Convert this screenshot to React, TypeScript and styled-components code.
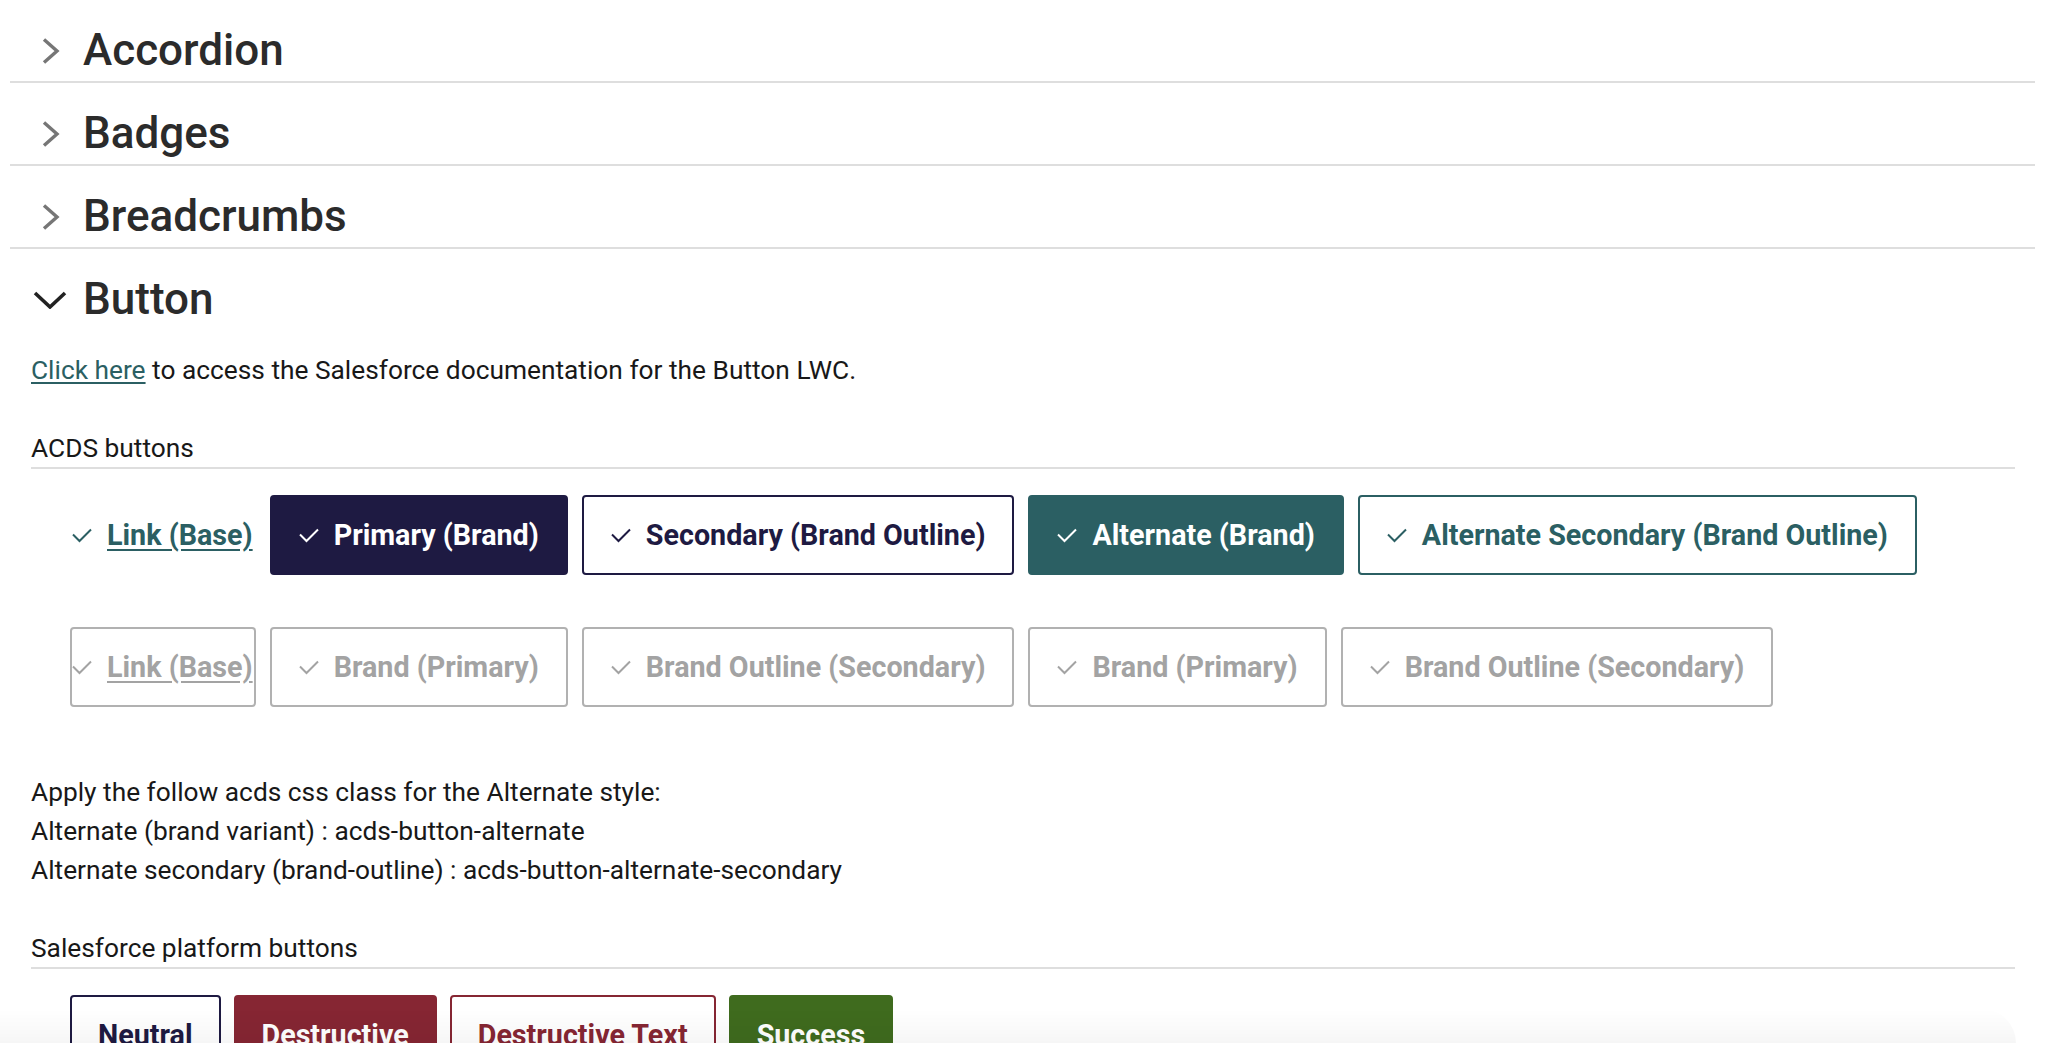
import React from 'react'
import styled, { createGlobalStyle, css } from 'styled-components'

const GlobalStyle = createGlobalStyle`
  body {
    margin: 0;
    background: #ffffff;
    font-family: Roboto, 'Liberation Sans', Arial, sans-serif;
    color: #181818;
  }
`

type Variant =
  | 'link'
  | 'brand'
  | 'outline'
  | 'alternate'
  | 'alternateOutline'
  | 'neutral'
  | 'destructive'
  | 'destructiveText'
  | 'success'

const colors = {
  navy: '#1e1a42',
  teal: '#2b5f63',
  maroon: '#862633',
  green: '#3f6b1e',
  disabled: '#a3a3a3',
  disabledBorder: '#b1b1b1',
  divider: '#dedede',
}

const variants: Record<Variant, ReturnType<typeof css>> = {
  link: css`
    background: transparent;
    border-color: transparent;
    color: ${colors.teal};
    padding: 0 1px 0 0;
    span {
      text-decoration: underline;
      text-underline-offset: 4px;
    }
  `,
  brand: css`
    background: ${colors.navy};
    border-color: ${colors.navy};
    color: #ffffff;
  `,
  outline: css`
    background: #ffffff;
    border-color: ${colors.navy};
    color: ${colors.navy};
  `,
  alternate: css`
    background: ${colors.teal};
    border-color: ${colors.teal};
    color: #ffffff;
  `,
  alternateOutline: css`
    background: #ffffff;
    border-color: ${colors.teal};
    color: ${colors.teal};
  `,
  neutral: css`
    background: #ffffff;
    border-color: ${colors.navy};
    color: ${colors.navy};
  `,
  destructive: css`
    background: ${colors.maroon};
    border-color: ${colors.maroon};
    color: #ffffff;
  `,
  destructiveText: css`
    background: #ffffff;
    border-color: ${colors.maroon};
    color: ${colors.maroon};
  `,
  success: css`
    background: ${colors.green};
    border-color: ${colors.green};
    color: #ffffff;
  `,
}

interface SectionProps {
  title: string
  open?: boolean
  children?: React.ReactNode
}

const ChevronRight = () => (
  <svg width="19" height="28" viewBox="0 0 19 28" fill="none">
    <path d="M3 2.5 L16 14 L3 25.5" stroke="#767676" strokeWidth="3.4" />
  </svg>
)

const ChevronDown = () => (
  <svg width="34" height="18" viewBox="0 0 34 18" fill="none">
    <path d="M2 2 L17 16 L32 2" stroke="#222222" strokeWidth="3.6" />
  </svg>
)

const Check = () => (
  <svg width="20" height="15" viewBox="0 0 20 15" fill="none">
    <path d="M1 6.5 L7.5 13 L19 1.5" stroke="currentColor" strokeWidth="2" />
  </svg>
)

const Section = ({ title, open, children }: SectionProps) => (
  <div>
    <SectionHeader $open={open}>
      <IconSlot>{open ? <ChevronDown /> : <ChevronRight />}</IconSlot>
      <SectionTitle>{title}</SectionTitle>
    </SectionHeader>
    {open && <SectionBody>{children}</SectionBody>}
  </div>
)

interface ButtonProps {
  label: string
  variant: Variant
  disabled?: boolean
  icon?: boolean
}

const DemoButton = ({ label, variant, disabled, icon = true }: ButtonProps) => (
  <StyledButton $variant={variant} $disabled={disabled} $compact={!icon}>
    {icon && <Check />}
    <span>{label}</span>
  </StyledButton>
)

const acdsButtons: ButtonProps[] = [
  { label: 'Link (Base)', variant: 'link' },
  { label: 'Primary (Brand)', variant: 'brand' },
  { label: 'Secondary (Brand Outline)', variant: 'outline' },
  { label: 'Alternate (Brand)', variant: 'alternate' },
  { label: 'Alternate Secondary (Brand Outline)', variant: 'alternateOutline' },
]

const disabledButtons: ButtonProps[] = [
  { label: 'Link (Base)', variant: 'link', disabled: true },
  { label: 'Brand (Primary)', variant: 'brand', disabled: true },
  { label: 'Brand Outline (Secondary)', variant: 'outline', disabled: true },
  { label: 'Brand (Primary)', variant: 'alternate', disabled: true },
  { label: 'Brand Outline (Secondary)', variant: 'alternateOutline', disabled: true },
]

const platformButtons: ButtonProps[] = [
  { label: 'Neutral', variant: 'neutral', icon: false },
  { label: 'Destructive', variant: 'destructive', icon: false },
  { label: 'Destructive Text', variant: 'destructiveText', icon: false },
  { label: 'Success', variant: 'success', icon: false },
]

const App = () => (
  <>
    <GlobalStyle />
    <Page>
      <Section title="Accordion" />
      <Section title="Badges" />
      <Section title="Breadcrumbs" />
      <Section title="Button" open>
        <Intro>
          <DocLink href="#">Click here</DocLink> to access the Salesforce documentation for the
          Button LWC.
        </Intro>

        <GroupTitle>ACDS buttons</GroupTitle>
        <ButtonRow>
          {acdsButtons.map((b, i) => (
            <DemoButton key={i} {...b} />
          ))}
        </ButtonRow>
        <ButtonRow $spaced>
          {disabledButtons.map((b, i) => (
            <DemoButton key={i} {...b} />
          ))}
        </ButtonRow>

        <Notes>
          <p>Apply the follow acds css class for the Alternate style:</p>
          <p>Alternate (brand variant) : acds-button-alternate</p>
          <p>Alternate secondary (brand-outline) : acds-button-alternate-secondary</p>
        </Notes>

        <GroupTitle>Salesforce platform buttons</GroupTitle>
        <ButtonRow $tight>
          {platformButtons.map((b, i) => (
            <DemoButton key={i} {...b} />
          ))}
        </ButtonRow>
      </Section>
    </Page>
    <BottomFade />
  </>
)

export default App

const Page = styled.div`
  margin: 0 13px 0 10px;
`

const SectionHeader = styled.div<{ $open?: boolean }>`
  display: flex;
  align-items: center;
  height: 83px;
  box-sizing: border-box;
  padding-top: 20px;
  border-bottom: 2px solid ${({ $open }) => ($open ? 'transparent' : colors.divider)};
`

const IconSlot = styled.div`
  display: flex;
  align-items: center;
  justify-content: center;
  width: 38px;
  margin-left: 21px;
  margin-right: 14px;
`

const SectionTitle = styled.h2`
  margin: 0;
  font-size: 44px;
  line-height: 1.2;
  font-weight: 500;
  color: #2b2b2b;
`

const SectionBody = styled.div`
  padding: 0 20px 0 21px;
  font-size: 26.3px;
  line-height: 39px;
`

const Intro = styled.p`
  margin: 19px 0 0;
`

const DocLink = styled.a`
  color: ${colors.teal};
  text-decoration: underline;
  text-underline-offset: 3px;
`

const GroupTitle = styled.div`
  margin-top: 40px;
  line-height: 37px;
  border-bottom: 2px solid ${colors.divider};
`

const ButtonRow = styled.div<{ $spaced?: boolean; $tight?: boolean }>`
  display: flex;
  gap: ${({ $tight }) => ($tight ? '13px' : '14px')};
  padding-left: 39px;
  margin-top: ${({ $spaced }) => ($spaced ? '52px' : '26px')};
`

const StyledButton = styled.button<{
  $variant: Variant
  $disabled?: boolean
  $compact?: boolean
}>`
  display: inline-flex;
  align-items: center;
  gap: 15px;
  height: 80px;
  box-sizing: border-box;
  padding: 0 ${({ $compact }) => ($compact ? '26px' : '27px')};
  border: 2px solid;
  border-radius: 4px;
  font-family: inherit;
  font-size: 28.7px;
  font-weight: 700;
  white-space: nowrap;
  cursor: pointer;

  ${({ $variant }) => variants[$variant]}

  ${({ $disabled, $variant }) =>
    $disabled &&
    css`
      background: #ffffff;
      border-color: ${colors.disabledBorder};
      color: ${colors.disabled};
      cursor: default;
      ${$variant === 'link' && 'padding: 0 1px 0 0;'}
    `}
`

const Notes = styled.div`
  margin-top: 66px;

  p {
    margin: 0;
  }
`

// faint shadow of the next card peeking in at the bottom edge
const BottomFade = styled.div`
  position: fixed;
  left: 0;
  bottom: 0;
  width: 2016px;
  height: 34px;
  border-top-right-radius: 60px;
  background: linear-gradient(to bottom, rgba(0, 0, 0, 0), rgba(0, 0, 0, 0.035));
  pointer-events: none;
`
